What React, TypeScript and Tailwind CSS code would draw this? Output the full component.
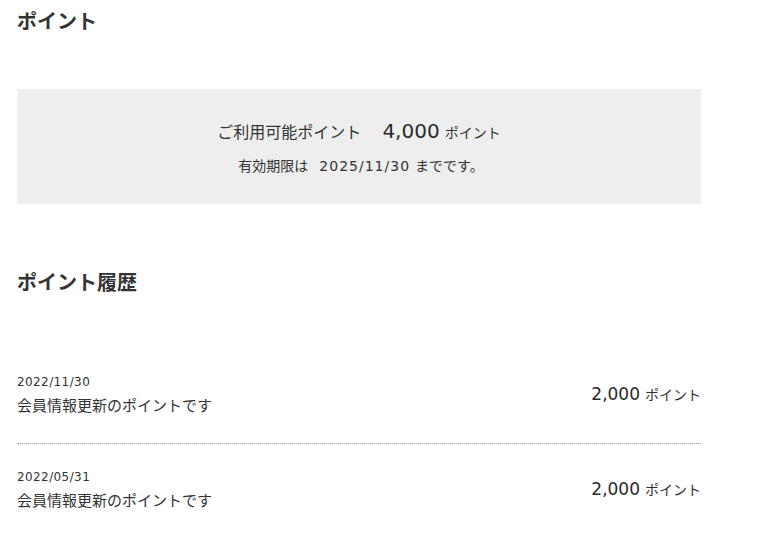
const font = {
  fontFamily: '"DejaVu Sans", "Noto Sans CJK JP", sans-serif',
};

const history = [
  { date: "2022/11/30", text: "会員情報更新のポイントです", amount: "2,000" },
  { date: "2022/05/31", text: "会員情報更新のポイントです", amount: "2,000" },
];

export default function App() {
  return (
    <div className="bg-white text-[#333] px-[17px] pt-[7px] w-[718px]" style={font}>
      {/* ポイント */}
      <h2 className="text-[20px] leading-[30px] font-bold">ポイント</h2>

      <div className="mt-[52px] bg-[#eeeeee] h-[115px] flex flex-col items-center pt-[28px]">
        <p className="flex items-baseline h-[28px] leading-[28px]">
          <span className="text-[16px]">ご利用可能ポイント</span>
          <span className="text-[20px] ml-[21px] text-[#2a2a2a]">4,000</span>
          <span className="text-[14px] ml-[5px]">ポイント</span>
        </p>
        <p className="mt-[11px] text-[14px] leading-[20px] pl-[4px]">
          有効期限は<span className="ml-[11px] mr-[5px] tracking-[1px]">2025/11/30</span>までです。
        </p>
      </div>

      {/* ポイント履歴 */}
      <h2 className="mt-[64px] text-[20px] leading-[30px] font-bold">
        ポイント履歴
      </h2>

      <ul className="mt-[51px]">
        {history.map((h, i) => (
          <li
            key={i}
            className={
              "flex items-center justify-between pt-[24px] pb-[26px] " +
              (i < history.length - 1 ? "border-b border-dotted border-[#999]" : "")
            }
          >
            <div>
              <p className="text-[12px] leading-[18px] tracking-[0.4px]">{h.date}</p>
              <p className="mt-[4px] text-[15px] leading-[22px]">{h.text}</p>
            </div>
            <p className="flex items-baseline">
              <span className="text-[17px] text-[#2a2a2a]">{h.amount}</span>
              <span className="text-[14px] ml-[5px]">ポイント</span>
            </p>
          </li>
        ))}
      </ul>
    </div>
  );
}
